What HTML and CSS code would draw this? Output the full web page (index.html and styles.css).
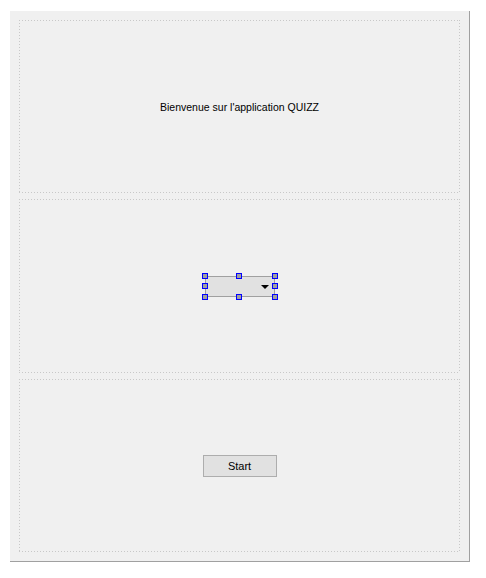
FILE: index.html
```html
<!DOCTYPE html>
<html>
<head>
<meta charset="utf-8">
<link rel="stylesheet" href="styles.css">
</head>
<body>
<div class="form">
  <div class="cell cell-top">
    <span class="label">Bienvenue sur l'application QUIZZ</span>
  </div>
  <div class="cell cell-mid">
    <div class="combo">
      <span class="arrow"></span>
      <span class="h h-tl"></span><span class="h h-tc"></span><span class="h h-tr"></span>
      <span class="h h-ml"></span><span class="h h-mr"></span>
      <span class="h h-bl"></span><span class="h h-bc"></span><span class="h h-br"></span>
    </div>
  </div>
  <div class="cell cell-bot">
    <div class="button">Start</div>
  </div>
</div>
</body>
</html>
```
FILE: styles.css
```css
html, body {
  margin: 0;
  padding: 0;
  background: #ffffff;
}
body {
  padding: 11px 0 0 10px;
  font-family: "Liberation Sans", Arial, sans-serif;
  font-size: 11px;
  color: #000;
}
.form {
  width: 441px;
  height: 532px;
  background: #f0f0f0;
  border-right: 1px solid #a0a0a0;
  border-bottom: 1px solid #a0a0a0;
  padding: 9px;
  display: flex;
  flex-direction: column;
  gap: 6px;
}
.cell {
  height: 173px;
  display: flex;
  align-items: center;
  justify-content: center;
  background-image:
    repeating-linear-gradient(to right, #c8c8c8 0 1px, transparent 1px 3px),
    repeating-linear-gradient(to right, #c8c8c8 0 1px, transparent 1px 3px),
    repeating-linear-gradient(to bottom, #c8c8c8 0 1px, transparent 1px 3px),
    repeating-linear-gradient(to bottom, #c8c8c8 0 1px, transparent 1px 3px);
  background-size: 100% 1px, 100% 1px, 1px 100%, 1px 100%;
  background-position: 0 0, 0 100%, 0 0, 100% 0;
  background-repeat: no-repeat;
}
.cell-mid { height: 174px; }
.label {
  font-size: 10.5px;
  margin-top: 1px;
}
.combo {
  position: relative;
  width: 68px;
  height: 19px;
  background: #e1e1e1;
  border: 1px solid #a0a0a0;
}
.arrow {
  position: absolute;
  right: 5px;
  top: 8px;
  width: 0;
  height: 0;
  border-left: 4px solid transparent;
  border-right: 4px solid transparent;
  border-top: 4px solid #000;
}
.h {
  position: absolute;
  width: 4px;
  height: 4px;
  background: #a0a0a0;
  border: 1px solid #0000ff;
}
.h-tl { left: -4px; top: -4px; }
.h-tc { left: 30px; top: -4px; }
.h-tr { right: -4px; top: -4px; }
.h-ml { left: -4px; top: 6px; }
.h-mr { right: -4px; top: 6px; }
.h-bl { left: -4px; bottom: -4px; }
.h-bc { left: 30px; bottom: -4px; }
.h-br { right: -4px; bottom: -4px; }
.button {
  width: 72px;
  height: 20px;
  background: #e1e1e1;
  border: 1px solid #adadad;
  display: flex;
  align-items: center;
  justify-content: center;
  font-size: 11px;
  margin-top: 1px;
}
```
